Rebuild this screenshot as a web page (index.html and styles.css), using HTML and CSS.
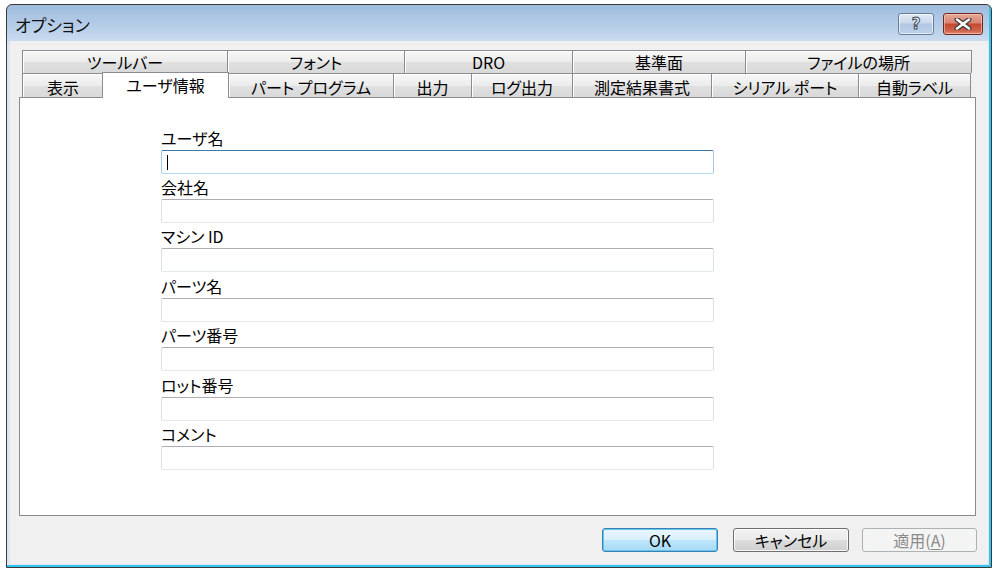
FILE: index.html
```html
<!DOCTYPE html>
<html lang="ja">
<head>
<meta charset="utf-8">
<title>オプション</title>
<link rel="stylesheet" href="styles.css">
</head>
<body>
<div class="window">
  <div class="titlebar">
    <span class="title">オプション</span>
    <div class="caption-buttons">
      <div class="cap-btn help"><span class="help-glyph">?</span></div>
      <div class="cap-btn close">
        <svg width="18" height="12" viewBox="0 0 18 12">
          <path d="M3 1.5 L15 10.5 M15 1.5 L3 10.5" stroke="#3a3a3a" stroke-width="5" stroke-linecap="round" fill="none"/>
          <path d="M3 1.5 L15 10.5 M15 1.5 L3 10.5" stroke="#ffffff" stroke-width="2.6" stroke-linecap="round" fill="none"/>
        </svg>
      </div>
    </div>
  </div>
  <div class="client">
    <div class="tabs">
      <div class="tab-row row1">
        <div class="tab">ツールバー</div>
        <div class="tab">フォント</div>
        <div class="tab">DRO</div>
        <div class="tab">基準面</div>
        <div class="tab last">ファイルの場所</div>
      </div>
      <div class="tab-row row2">
        <div class="tab">表示</div>
        <div class="tab selected">ユーザ情報</div>
        <div class="tab">パート プログラム</div>
        <div class="tab">出力</div>
        <div class="tab">ログ出力</div>
        <div class="tab">測定結果書式</div>
        <div class="tab">シリアル ポート</div>
        <div class="tab last">自動ラベル</div>
      </div>
    </div>
    <div class="panel">
      <div class="fields">
        <div class="field">
          <label class="label">ユーザ名</label>
          <div class="input focused"><span class="caret"></span></div>
        </div>
        <div class="field">
          <label class="label">会社名</label>
          <div class="input"></div>
        </div>
        <div class="field">
          <label class="label">マシン ID</label>
          <div class="input"></div>
        </div>
        <div class="field shift">
          <label class="label">パーツ名</label>
          <div class="input"></div>
        </div>
        <div class="field">
          <label class="label">パーツ番号</label>
          <div class="input"></div>
        </div>
        <div class="field shift">
          <label class="label">ロット番号</label>
          <div class="input"></div>
        </div>
        <div class="field">
          <label class="label">コメント</label>
          <div class="input"></div>
        </div>
      </div>
    </div>
    <div class="buttons">
      <div class="btn default">OK</div>
      <div class="btn cancel">キャンセル</div>
      <div class="btn disabled">適用(<u>A</u>)</div>
    </div>
  </div>
</div>
</body>
</html>
```

FILE: styles.css
```css
html, body {
  margin: 0;
  padding: 0;
  background: #ffffff;
}

body {
  font-family: "Noto Sans CJK JP", "Noto Sans", sans-serif;
  font-size: 16px;
  font-feature-settings: "palt";
  color: #000;
}

.window {
  box-sizing: border-box;
  margin: 4px 0 0 6px;
  width: 986px;
  height: 564px;
  border: 1px solid #3a3a3a;
  border-radius: 6px 6px 0 0;
  background: linear-gradient(to bottom, #9fbcdd 0px, #b3cbe7 18px, #c6d9ef 34px, #dde6f2 40px, #dde6f2 100%);
  box-shadow: inset -2px -2px 0 #33c3ec;
  display: flex;
  flex-direction: column;
}

.titlebar {
  height: 36px;
  display: flex;
  align-items: center;
  justify-content: space-between;
  padding-left: 8px;
  box-sizing: border-box;
}

.title {
  font-size: 17px;
  line-height: 1;
  color: #111;
  padding-top: 2px;
}

.caption-buttons {
  display: flex;
  align-items: flex-start;
  align-self: flex-start;
  margin-top: 8px;
  margin-right: 8px;
}

.cap-btn {
  box-sizing: border-box;
  height: 22px;
  border-radius: 3px;
  display: flex;
  align-items: center;
  justify-content: center;
}

.help {
  width: 36px;
  margin-right: 9px;
  border: 1px solid #687d9b;
  background: linear-gradient(to bottom, #e2ebf6 0%, #c8d8ec 45%, #b1c7e2 50%, #bcd2ea 100%);
  box-shadow: inset 0 0 0 1px rgba(255,255,255,0.6);
}

.help-glyph {
  font-family: "DejaVu Sans", sans-serif;
  font-weight: bold;
  font-size: 15px;
  line-height: 1;
  color: #ffffff;
  -webkit-text-stroke: 1px #404a58;
}

.close {
  width: 40px;
  border: 1px solid #6e2a1e;
  background: linear-gradient(to bottom, #e8a898 0%, #d88471 45%, #c5482f 50%, #d0644c 85%, #e2907a 100%);
  box-shadow: inset 0 0 0 1px rgba(255,220,210,0.5);
}

.client {
  flex: 1;
  margin: 0 3px 3px 3px;
  background: #f0f0f0;
  display: flex;
  flex-direction: column;
  padding: 9px 0 0 9px;
  box-sizing: border-box;
}

.tabs {
  margin-left: 3px;
  width: 951px;
  display: flex;
  flex-direction: column;
}

.tab-row {
  display: grid;
}

.row1 {
  grid-template-columns: 205px 177px 168px 173px 227px;
  height: 23px;
}

.row2 {
  grid-template-columns: 81px 125px 165px 78px 101px 139px 147px 113px;
  height: 24px;
}

.tab {
  box-sizing: border-box;
  border-top: 1px solid #898c95;
  border-left: 1px solid #898c95;
  background: linear-gradient(to bottom, #f7f7f7 0%, #ececec 50%, #e0e0e0 52%, #d9d9d9 100%);
  box-shadow: inset 1px 1px 0 #ffffff;
  display: flex;
  align-items: center;
  justify-content: center;
  font-size: 16px;
  line-height: 1;
  white-space: nowrap;
}

.tab.last {
  border-right: 1px solid #898c95;
}

.row2 .tab {
  padding-top: 2px;
}

.tab.selected {
  position: relative;
  z-index: 1;
  margin: -1px -1px -1px -1px;
  border-right: 1px solid #898c95;
  background: #ffffff;
  box-shadow: none;
  padding-top: 0;
  padding-bottom: 2px;
}

.panel {
  box-sizing: border-box;
  width: 957px;
  height: 419px;
  border: 1px solid #898c95;
  background: #ffffff;
  padding: 27px 0 0 141px;
}

.fields {
  display: flex;
  flex-direction: column;
  width: 553px;
}

.field {
  display: flex;
  flex-direction: column;
}

.field.shift {
  margin-top: 1px;
}

.label {
  height: 25px;
  line-height: 23px;
  padding-top: 2px;
  box-sizing: border-box;
  font-size: 16px;
}

.input {
  box-sizing: border-box;
  height: 24px;
  border: 1px solid #dbdfe6;
  border-top-color: #abadb3;
  border-bottom-color: #e3e9ef;
  border-radius: 2px;
  background: #ffffff;
  display: flex;
  align-items: center;
}

.input.focused {
  border-color: #a4c9e3;
  border-top-color: #3d7bad;
  border-bottom-color: #b7d9ed;
}

.caret {
  width: 1px;
  height: 15px;
  margin-left: 5px;
  background: #000;
}

.buttons {
  display: flex;
  justify-content: flex-end;
  margin-top: 12px;
  padding-right: 11px;
}

.btn {
  box-sizing: border-box;
  width: 116px;
  height: 24px;
  border: 1px solid #707070;
  border-radius: 3px;
  background: linear-gradient(to bottom, #f2f2f2 0%, #ebebeb 48%, #dddddd 52%, #cfcfcf 100%);
  box-shadow: inset 0 0 0 1px rgba(255,255,255,0.8);
  display: flex;
  align-items: center;
  justify-content: center;
  font-size: 16px;
  line-height: 1;
}

.btn.default {
  border-color: #3c7fb1;
  background: linear-gradient(to bottom, #eaf6fd 0%, #d9f0fc 48%, #bee6fd 52%, #a7d9f5 100%);
  box-shadow: inset 0 0 0 1px #63c8f0;
}

.btn.cancel {
  margin-left: 15px;
}

.btn.disabled {
  width: 115px;
  margin-left: 13px;
  border-color: #adb2b5;
  background: #f4f4f4;
  box-shadow: none;
  color: #8a8a8a;
}

.btn.disabled u {
  text-decoration: underline;
  text-underline-offset: 2px;
}
```
